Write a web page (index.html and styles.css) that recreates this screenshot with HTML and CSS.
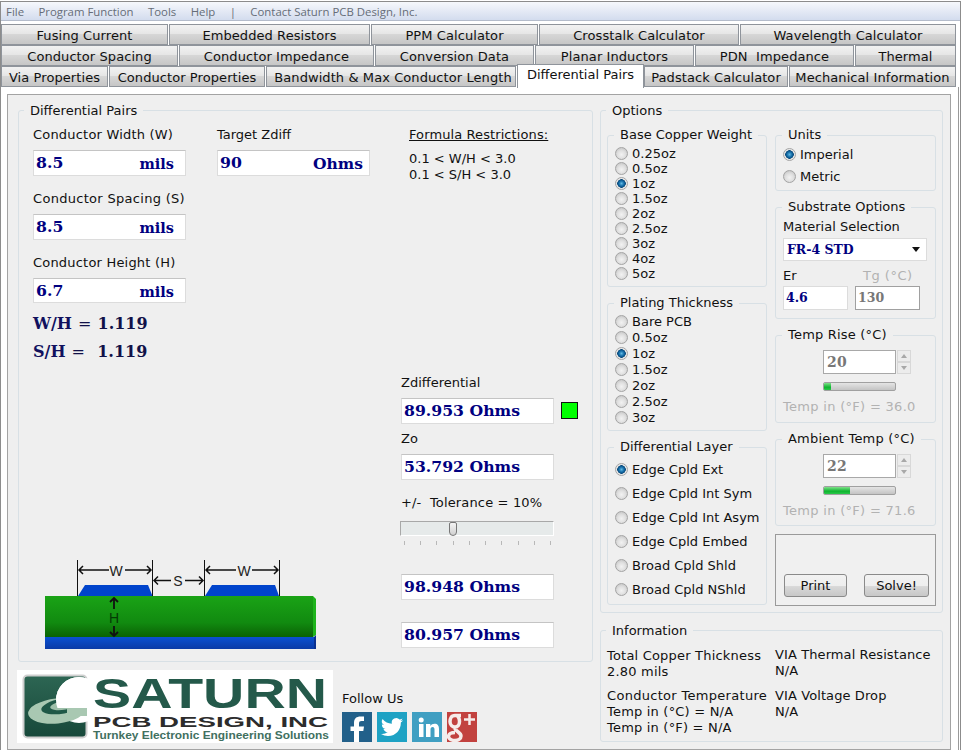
FILE: index.html
```html
<!DOCTYPE html>
<html lang="en">
<head>
<meta charset="utf-8">
<title>Saturn PCB Toolkit</title>
<link rel="stylesheet" href="styles.css">
</head>
<body>
<div class="window">
  <nav class="menubar">
    <span>File</span><span>Program Function</span><span>Tools</span><span>Help</span><span>|</span><span>Contact Saturn PCB Design, Inc.</span>
  </nav>
  <div class="tabs">
    <div class="tabrow row1">
      <div class="tab">Fusing Current</div><div class="tab">Embedded Resistors</div><div class="tab">PPM Calculator</div><div class="tab">Crosstalk Calculator</div><div class="tab">Wavelength Calculator</div>
    </div>
    <div class="tabrow row2">
      <div class="tab">Conductor Spacing</div><div class="tab">Conductor Impedance</div><div class="tab">Conversion Data</div><div class="tab">Planar Inductors</div><div class="tab">PDN&nbsp; Impedance</div><div class="tab">Thermal</div>
    </div>
    <div class="tabrow row3">
      <div class="tab">Via Properties</div><div class="tab">Conductor Properties</div><div class="tab nudge">Bandwidth &amp; Max Conductor Length</div><div class="tab active">Differential Pairs</div><div class="tab">Padstack Calculator</div><div class="tab">Mechanical Information</div>
    </div>
  </div>
  <div class="tabpage">
    <div class="panel">
      <div class="leftside">
        <fieldset class="group dp">
          <legend>Differential Pairs</legend>
          <div class="dpbody">
            <div class="col inputs">
              <div class="lbl">Conductor Width (W)</div>
              <div class="box"><span class="val">8.5</span><span class="unit">mils</span></div>
              <div class="lbl next wide">Conductor Spacing (S)</div>
              <div class="box"><span class="val">8.5</span><span class="unit">mils</span></div>
              <div class="lbl next">Conductor Height (H)</div>
              <div class="box short"><span class="val">6.7</span><span class="unit">mils</span></div>
              <div class="ratio"><b class="rk">W/H</b> = <b>1.119</b></div>
              <div class="ratio"><b class="rk">S/H</b> =&nbsp; <b>1.119</b></div>
            </div>
            <div class="col">
              <div class="lbl">Target Zdiff</div>
              <div class="box"><span class="val">90</span><span class="unit big">Ohms</span></div>
            </div>
            <div class="col results">
              <div class="restrict">
                <div class="lbl under">Formula Restrictions:</div>
                <div class="rline first">0.1 &lt; W/H &lt; 3.0</div>
                <div class="rline">0.1 &lt; S/H &lt; 3.0</div>
              </div>
              <div class="lbl zd">Zdifferential</div>
              <div class="boxrow">
                <div class="box"><span class="val">89.953 Ohms</span></div>
                <div class="swatch"></div>
              </div>
              <div class="lbl zo">Zo</div>
              <div class="box"><span class="val">53.792 Ohms</span></div>
              <div class="lbl tol">+/- &nbsp;Tolerance = 10%</div>
              <div class="slider"><div class="thumb"></div></div>
              <div class="ticks"><i></i><i></i><i></i><i></i><i></i><i></i><i></i><i></i><i></i><i></i></div>
              <div class="box hi"><span class="val">98.948 Ohms</span></div>
              <div class="box lo"><span class="val">80.957 Ohms</span></div>
            </div>
            <svg class="diagram" viewBox="0 0 290 100" width="290" height="100" aria-label="Differential pair cross section">
              <defs>
                <linearGradient id="gr" x1="0" y1="0" x2="0" y2="1"><stop offset="0" stop-color="#1aa316"/><stop offset=".65" stop-color="#118a10"/><stop offset="1" stop-color="#0a6204"/></linearGradient>
                <linearGradient id="bl" x1="0" y1="0" x2="0" y2="1"><stop offset="0" stop-color="#0a50d2"/><stop offset="1" stop-color="#0a3aa6"/></linearGradient>
              </defs>
              <rect x="12" y="40" width="268" height="41" fill="url(#gr)"/>
              <polygon points="280,40 283,43 283,79 280,81" fill="#1eb41c"/>
              <rect x="12" y="81" width="269" height="12" fill="url(#bl)"/>
              <polygon points="281,81 283,79 283,93 281,93" fill="#0a3090"/>
              <polygon points="45,40 52,29 115,29 119.500,40" fill="#0044cc"/>
              <polygon points="172,40 179,29 242,29 246,40" fill="#0044cc"/>
              <g class="dim">
                <path class="hair" d="M44.500 4V40M119.500 4V40M171.500 4V40M246.500 4V40"/>
                <path d="M46 14H76M92 14H118M50 10L46 14L50 18M114 10L118 14L114 18"/>
                <path d="M121 24.500H138M152 24.500H170M125 20.500L121 24.500L125 28.500M166 20.500L170 24.500L166 28.500"/>
                <path d="M173 14H203M219 14H245M177 10L173 14L177 18M241 10L245 14L241 18"/>
                <path class="thick" d="M81 42V53M81 70V80M77 46L81 42L85 46M77 76L81 80L85 76"/>
              </g>
              <text class="dimtext" x="83" y="19.500" text-anchor="middle">W</text>
              <text class="dimtext" x="145" y="30" text-anchor="middle">S</text>
              <text class="dimtext" x="211" y="19.500" text-anchor="middle">W</text>
              <text class="dimtext dark" x="81" y="66.500" text-anchor="middle">H</text>
            </svg>
          </div>
        </fieldset>
        <div class="footer">
          <svg class="logo" viewBox="0 0 316 73" width="316" height="73" aria-label="Saturn PCB Design logo">
            <defs>
              <linearGradient id="em" x1="0" y1="0" x2="0" y2="1"><stop offset="0" stop-color="#2d6653"/><stop offset="1" stop-color="#17483a"/></linearGradient>
              <clipPath id="emclip"><rect x="6" y="5" width="66" height="64" rx="4"/></clipPath>
              <clipPath id="upper"><rect x="36" y="0" width="40" height="38"/></clipPath>
            </defs>
            <rect width="316" height="73" fill="#fff"/>
            <rect x="6.500" y="5.500" width="63" height="62" rx="4" fill="url(#em)" stroke="#cfcfcf" stroke-width="2"/>
            <g clip-path="url(#emclip)">
              <circle cx="62" cy="30" r="23" fill="#fff"/>
              <ellipse cx="40" cy="41" rx="29" ry="12.500" fill="#a9c8b2" transform="rotate(-6 40 41)"/>
              <ellipse cx="46" cy="36" rx="22" ry="7.500" fill="#1f5847" transform="rotate(-10 46 36)"/>
              <ellipse cx="48" cy="35" rx="15" ry="4.500" fill="#9dbfa9" transform="rotate(-10 48 35)"/>
              <ellipse cx="52" cy="34" rx="11" ry="3" fill="#1f5847" transform="rotate(-10 52 34)"/>
              <circle cx="62" cy="30" r="23" fill="#fff" clip-path="url(#upper)"/>
              <rect x="50" y="38" width="20" height="8" fill="#a9c8b2"/>
            </g>
            <text class="l1" x="76" y="37.500" textLength="234" lengthAdjust="spacingAndGlyphs">SATURN</text>
            <text class="l2" x="76" y="57" textLength="235" lengthAdjust="spacingAndGlyphs">PCB DESIGN, INC</text>
            <text class="l3" x="76" y="69" textLength="236" lengthAdjust="spacingAndGlyphs">Turnkey Electronic Engineering Solutions</text>
          </svg>
          <div class="follow">
            <div class="lbl">Follow Us</div>
            <div class="social">
              <svg viewBox="0 0 30 30" width="30" height="30" aria-label="Facebook"><rect width="30" height="30" fill="#22608a"/><path fill="#fff" d="M12 30V19H8.500v-4.500H12V11c0-4.500 2.500-6.500 6.500-6.500H22V9h-2.500c-1.800 0-2.500.8-2.500 2.500v3h5l-.7 4.500H17v11z"/></svg>
              <svg viewBox="0 0 30 30" width="30" height="30" aria-label="Twitter"><rect width="30" height="30" fill="#1ea2c4"/><path fill="#fff" transform="translate(4 4) scale(.92)" d="M23.950 4.570a10 10 0 0 1-2.820.77 4.960 4.960 0 0 0 2.160-2.720 9.900 9.900 0 0 1-3.120 1.190 4.920 4.920 0 0 0-8.380 4.480A13.980 13.980 0 0 1 1.670 3.150a4.920 4.920 0 0 0 1.520 6.570 4.900 4.900 0 0 1-2.230-.62v.06a4.920 4.920 0 0 0 3.950 4.830 5 5 0 0 1-2.210.08 4.940 4.940 0 0 0 4.600 3.420A9.870 9.870 0 0 1 0 19.540a13.940 13.940 0 0 0 7.550 2.210c9.060 0 14-7.500 14-13.980 0-.21 0-.42-.02-.63A9.940 9.940 0 0 0 24 4.590z"/></svg>
              <svg viewBox="0 0 30 30" width="30" height="30" aria-label="LinkedIn"><rect width="30" height="30" fill="#409fc2"/><rect x="7" y="12" width="4.500" height="13" fill="#fff"/><circle cx="9.200" cy="8" r="2.500" fill="#fff"/><path fill="#fff" d="M14 12h4.300v2c1-1.500 2.500-2.300 4.200-2.300 3.200 0 4.500 2 4.500 5.300v8h-4.500v-7.500c0-1.600-.6-2.500-1.900-2.500-1.400 0-2.100 1-2.100 2.600V25H14z"/></svg>
              <svg viewBox="0 0 30 30" width="30" height="30" aria-label="Google Plus"><rect width="30" height="30" fill="#c2423f"/><path fill="none" stroke="#f6ecea" stroke-width="3.500" d="M14 3.500H8C4 3.500 3 7 3 9.500c0 3 2 5.500 5 5.500s4.500-2.500 4.500-5.500-1.500-6-3.500-6M8.500 16c-1 1 0 2 2 3.500s3.500 2.500 3.500 4.500c0 3-3 4.500-6 4.500S1.500 27 1.500 24.500 4.500 20.500 8 20.500"/><path fill="none" stroke="#f6ecea" stroke-width="2.500" d="M22.500 2v11M17 7.500h11"/></svg>
            </div>
          </div>
        </div>
      </div>
      <div class="rightside">
        <fieldset class="group options">
          <legend>Options</legend>
          <div class="optbody">
            <div class="optcol">
              <fieldset class="sub copper">
                <legend>Base Copper Weight</legend>
                <div class="radio-row"><i class="radio"></i>0.25oz</div>
                <div class="radio-row"><i class="radio"></i>0.5oz</div>
                <div class="radio-row"><i class="radio on"></i>1oz</div>
                <div class="radio-row"><i class="radio"></i>1.5oz</div>
                <div class="radio-row"><i class="radio"></i>2oz</div>
                <div class="radio-row"><i class="radio"></i>2.5oz</div>
                <div class="radio-row"><i class="radio"></i>3oz</div>
                <div class="radio-row"><i class="radio"></i>4oz</div>
                <div class="radio-row"><i class="radio"></i>5oz</div>
              </fieldset>
              <fieldset class="sub plating">
                <legend>Plating Thickness</legend>
                <div class="radio-row"><i class="radio"></i>Bare PCB</div>
                <div class="radio-row"><i class="radio"></i>0.5oz</div>
                <div class="radio-row"><i class="radio on"></i>1oz</div>
                <div class="radio-row"><i class="radio"></i>1.5oz</div>
                <div class="radio-row"><i class="radio"></i>2oz</div>
                <div class="radio-row"><i class="radio"></i>2.5oz</div>
                <div class="radio-row"><i class="radio"></i>3oz</div>
              </fieldset>
              <fieldset class="sub layer">
                <legend>Differential Layer</legend>
                <div class="radio-row"><i class="radio on"></i>Edge Cpld Ext</div>
                <div class="radio-row"><i class="radio"></i>Edge Cpld Int Sym</div>
                <div class="radio-row"><i class="radio"></i>Edge Cpld Int Asym</div>
                <div class="radio-row"><i class="radio"></i>Edge Cpld Embed</div>
                <div class="radio-row"><i class="radio"></i>Broad Cpld Shld</div>
                <div class="radio-row"><i class="radio"></i>Broad Cpld NShld</div>
              </fieldset>
            </div>
            <div class="optcol">
              <fieldset class="sub units">
                <legend>Units</legend>
                <div class="radio-row"><i class="radio on"></i>Imperial</div>
                <div class="radio-row"><i class="radio"></i>Metric</div>
              </fieldset>
              <fieldset class="sub substrate">
                <legend>Substrate Options</legend>
                <div class="lbl">Material Selection</div>
                <div class="select"><span class="val small">FR-4 STD</span><i class="caret"></i></div>
                <div class="ertg">
                  <div class="ercol">
                    <div class="lbl">Er</div>
                    <div class="mini"><span class="val small">4.6</span></div>
                  </div>
                  <div class="ercol">
                    <div class="lbl off tg">Tg (°C)</div>
                    <div class="mini dis"><span class="val small">130</span></div>
                  </div>
                </div>
              </fieldset>
              <fieldset class="sub temp">
                <legend>Temp Rise (°C)</legend>
                <div class="spinrow">
                  <div class="spinbox"><span class="val small">20</span></div>
                  <div class="spin"><b class="up"></b><b class="down"></b></div>
                </div>
                <div class="meter"><div class="fill f1"></div></div>
                <div class="lbl off readout">Temp in (°F) = 36.0</div>
              </fieldset>
              <fieldset class="sub temp amb">
                <legend>Ambient Temp (°C)</legend>
                <div class="spinrow">
                  <div class="spinbox"><span class="val small">22</span></div>
                  <div class="spin"><b class="up"></b><b class="down"></b></div>
                </div>
                <div class="meter"><div class="fill f2"></div></div>
                <div class="lbl off readout">Temp in (°F) = 71.6</div>
              </fieldset>
              <div class="actions">
                <button class="btn print" type="button">Print</button>
                <button class="btn solve" type="button">Solve!</button>
              </div>
            </div>
          </div>
        </fieldset>
        <fieldset class="group info">
          <legend>Information</legend>
          <div class="infobody">
            <div class="infocol">
              <div class="lbl">Total Copper Thickness</div>
              <div class="lbl">2.80 mils</div>
              <div class="lbl gapped">Conductor Temperature</div>
              <div class="lbl">Temp in (°C) = N/A</div>
              <div class="lbl">Temp in (°F) = N/A</div>
            </div>
            <div class="infocol second">
              <div class="lbl">VIA Thermal Resistance</div>
              <div class="lbl">N/A</div>
              <div class="lbl gapped">VIA Voltage Drop</div>
              <div class="lbl">N/A</div>
            </div>
          </div>
        </fieldset>
      </div>
    </div>
  </div>
</div>
</body>
</html>
```

FILE: styles.css
```css
* { box-sizing: border-box; }
html, body { margin: 0; padding: 0; background: #fff; }
body {
  width: 963px;
  height: 750px;
  overflow: hidden;
  font: 13px/16px "DejaVu Sans", sans-serif;
  color: #111;
}
.window {
  width: 961px;
  height: 749px;
  margin-top: 1px;
  border: 1px solid #8c8c8c;
  border-bottom: 0;
  display: flex;
  flex-direction: column;
  background: #fff;
}
.menubar {
  height: 19px;
  flex: none;
  display: flex;
  gap: 14.400px;
  align-items: center;
  padding: 2px 0 0 5px;
  background: linear-gradient(#f6f8fc, #d3dcee);
  border-bottom: 1px solid #b4bccb;
  font: 11.400px/16px "Open Sans", sans-serif;
  color: #666d78;
}
.tabs { flex: none; padding-top: 3px; }
.tabrow { display: grid; column-gap: 1px; height: 21px; }
.row1 { grid-template-columns: 167px 201px 167px 200px 216px; }
.row2 { grid-template-columns: 177px 195px 159px 159px 159px 101px; }
.row3 { grid-template-columns: 107px 156px 250px 126px 144px 167px; }
.tab {
  height: 21px;
  border: 1px solid #8f949b;
  background: linear-gradient(#f2f2f2 0, #e6e6e6 45%, #d6d6d6 50%, #c6c6c6 100%);
  text-align: center;
  line-height: 21px;
  letter-spacing: .08px;
  white-space: nowrap;
}
.tab.nudge { padding-left: 4px; }
.tab.active {
  position: relative;
  z-index: 2;
  height: 24px;
  margin-top: -2px;
  margin-right: -1px;
  border-bottom: 0;
  background: #fff;
  line-height: 20px;
  letter-spacing: 0;
}
.tabpage {
  flex: 1;
  min-height: 0;
  margin-right: 1px;
  padding: 7px 6px 0;
  border-right: 1px solid #9a9a9a;
  background: #fff;
}
.panel {
  height: 100%;
  width: 944px;
  display: flex;
  gap: 7px;
  padding: 8px 7px 0 10px;
  background: #efefef;
  border: 1px solid #a3a3a3;
}
.leftside { width: 575px; flex: none; }
.rightside { width: 343px; flex: none; }

fieldset { margin: 0; padding: 0; min-width: 0; }
.group, .sub { border: 1px solid #d8e0e5; border-radius: 3px; }
legend { margin-left: 5px; padding: 0 6px; line-height: 15px; }
.sub > legend { margin-left: 6px; line-height: 16px; }

.dp { height: 559px; }
.dpbody {
  display: grid;
  height: 543px;
  padding: 8px 0 5px 14px;
  grid-template-columns: 153px 153px 1fr;
  grid-template-rows: auto 1fr;
  column-gap: 31px;
}
.col { min-width: 0; }
.results { grid-column: 3; grid-row: 1 / 3; }
.diagram { grid-column: 1 / 3; grid-row: 2; align-self: end; display: block; }
.lbl { padding-top: 1px; margin-bottom: -1px; line-height: 16px; white-space: nowrap; }
.lbl.next { margin-top: 14px; }
.inputs .lbl { letter-spacing: .2px; }
.inputs .lbl.wide { letter-spacing: .3px; }
.box {
  display: flex;
  justify-content: space-between;
  width: 153px;
  height: 26px;
  margin-top: 8px;
  padding: 0 11px 0 2px;
  background: #fff;
  border: 1px solid #dcdcdc;
  border-top-color: #c4c4c4;
}
.box.short { height: 25px; }
.val {
  font: bold 15.700px/24px "DejaVu Serif", serif;
  color: #000080;
  white-space: nowrap;
}
.val.small { font-size: 12.500px; line-height: 22px; }
.unit {
  font: bold 14.500px/25px "DejaVu Serif", serif;
  color: #000080;
}
.unit.big { font-size: 15.500px; margin-right: -5px; }
.ratio {
  margin-top: 12px;
  font: 16px/16px "DejaVu Serif", serif;
  word-spacing: 1px;
  color: #111148;
  white-space: nowrap;
}
.box.short + .ratio { margin-top: 13px; }
.ratio b { font-weight: bold; }
.ratio .rk { color: #11115e; }
.under { text-decoration: underline; letter-spacing: .1px; }
.restrict { padding-left: 8px; }
.rline { padding-top: 1px; margin-bottom: -1px; line-height: 16px; }
.rline.first { margin-top: 8px; }
.zd { margin-top: 192px; }
.boxrow { display: flex; align-items: flex-start; gap: 7px; }
.swatch {
  width: 17px;
  height: 17px;
  margin-top: 12px;
  background: #00ff00;
  border: 1px solid #111;
}
.zo { margin-top: 6px; }
.tol { margin-top: 14px; letter-spacing: .15px; }
.slider {
  position: relative;
  width: 154px;
  height: 15px;
  margin: 11px 0 0 -1px;
  background: #e6eaea;
  border: 1px solid #fff;
  border-top-color: #a8a8a8;
  border-left-color: #a8a8a8;
}
.thumb {
  position: absolute;
  left: 48px;
  top: 0;
  width: 8px;
  height: 14px;
  border: 1px solid #777;
  border-radius: 2px 2px 4px 4px;
  background: linear-gradient(#f4f4f4, #d0d0d0);
}
.ticks {
  display: flex;
  justify-content: space-between;
  width: 147px;
  margin: 5px 0 0 3px;
}
.ticks i { width: 1px; height: 4px; background: #b8b8b8; }
.box.hi { margin-top: 29px; }
.box.lo { margin-top: 22px; }

.footer { display: flex; align-items: flex-end; gap: 9px; margin: 8px 0 0 -1px; }
.logo { display: block; flex: none; }
.follow { margin-bottom: 1px; }
.social { display: flex; gap: 5px; margin-top: 6px; }
.social svg { display: block; }
.l1 { font: bold 42px "Liberation Sans", sans-serif; fill: #24594a; }
.l2 { font: bold 15px "Liberation Sans", sans-serif; fill: #2c2c2c; }
.l3 { font: bold 10px "Liberation Sans", sans-serif; fill: #41705f; }
.dim { fill: none; stroke: #111; stroke-width: 1.500px; }
.dim .hair { stroke-width: 1px; }
.dim .thick { stroke-width: 1.800px; }
.dimtext { font: 14px "Liberation Sans", sans-serif; fill: #222; }
.dimtext.dark { fill: #053a05; }

.options { height: 510px; }
.optbody {
  display: grid;
  grid-template-columns: 160px 161px;
  column-gap: 8px;
  padding: 9px 0 0 6px;
}
.optcol { display: flex; flex-direction: column; gap: 8px; min-width: 0; }
.radio-row {
  display: flex;
  align-items: center;
  gap: 4px;
  padding: 2px 0 0 7px;
  white-space: nowrap;
}
.radio {
  width: 13px;
  height: 13px;
  margin-top: -2px;
  flex: none;
  border-radius: 50%;
  border: 1px solid #a4a4a4;
  background: radial-gradient(circle at 50% 60%, #f2f2f2 0, #e0e0e0 45%, #cccccc 75%, #ececec 100%);
}
.radio.on {
  background: radial-gradient(circle at 50% 50%, #62b9e4 0, #146da8 2.500px, #0b4b7c 4px, #e2e2e2 4.500px, #f2f2f2 6px);
}
.copper { height: 160px; }
.copper .radio-row { height: 15px; }
.copper legend { margin-bottom: 2.500px; }
.plating { height: 136px; }
.plating .radio-row { height: 16px; }
.plating legend { margin-bottom: 2px; }
.layer { height: 166px; }
.layer .radio-row { height: 24px; }
.layer legend { margin-bottom: 2px; }
.units { height: 64px; }
.units .radio-row { height: 22px; }
.substrate { height: 120px; padding: 0 7px; }
.substrate legend { margin-left: -1px; }
.substrate > .lbl { margin-top: 3px; }
.select {
  display: flex;
  justify-content: space-between;
  align-items: center;
  width: 144px;
  height: 23px;
  margin-top: 4px;
  padding: 0 6px 0 3px;
  background: #fff;
  border: 1px solid #dcdcdc;
}
.caret {
  width: 0;
  height: 0;
  border: 4px solid transparent;
  border-top: 5px solid #111;
  border-bottom: 0;
}
.ertg { display: flex; gap: 7px; margin-top: 6px; }
.ercol { width: 65px; }
.ercol .tg { padding-left: 8px; letter-spacing: .5px; }
.off { color: #b2b2b2; }
.mini {
  width: 65px;
  height: 24px;
  margin-top: 3px;
  padding: 0 2px;
  background: #fff;
  border: 1px solid #dcdcdc;
}
.mini.dis { border-color: #a0a0a0; }
.mini.dis .val, .spinbox .val { color: #777; }
.temp { height: 96px; padding: 0 7px; letter-spacing: .2px; }
.temp.amb { height: 95px; }
.temp legend { margin-left: -1px; }
.spinrow { display: flex; gap: 1px; margin: 7px 0 0 40px; }
.spinbox {
  width: 73px;
  height: 24px;
  padding: 0 3px;
  background: #fff;
  border: 1px solid #a8a8a8;
}
.spinbox .val { font-size: 14px; }
.spin { display: flex; flex-direction: column; width: 14px; }
.spin b {
  flex: 1;
  display: flex;
  align-items: center;
  justify-content: center;
  border: 1px solid #d8d8d8;
  background: #ececec;
}
.spin b::before {
  content: "";
  border: 3px solid transparent;
  border-bottom: 0;
  border-top: 4px solid #a8a8a8;
}
.spin .up::before { border-top: 0; border-bottom: 4px solid #a8a8a8; }
.meter {
  width: 73px;
  height: 9px;
  margin: 8px 0 0 40px;
  border: 1px solid #a0a0a0;
  border-radius: 2px;
  background: linear-gradient(#e4e4e4, #c4c4c4);
  overflow: hidden;
}
.fill { height: 100%; background: linear-gradient(#7fe08a, #0fb52f 60%, #2ac84a); }
.f1 { width: 7px; }
.f2 { width: 26px; }
.readout { margin-top: 7px; letter-spacing: .3px; }
.actions {
  height: 72px;
  display: flex;
  align-items: flex-end;
  justify-content: space-between;
  padding: 0 6px 8px 8px;
  border: 1px solid #9a9a9a;
  background: #f0f0f0;
}
.btn {
  height: 23px;
  padding: 0;
  font: 13px/16px "DejaVu Sans", sans-serif;
  color: #111;
  border: 1px solid #8a8a8a;
  border-radius: 3px;
  background: linear-gradient(#f2f2f2 0, #eeeeee 50%, #d8d8d8 55%, #c8c8c8 100%);
}
.print { width: 63px; }
.solve { width: 65px; }
.info { height: 119px; margin-top: 10px; }
.infobody {
  display: grid;
  grid-template-columns: 168px 1fr;
  padding: 9px 0 0 6px;
  letter-spacing: .2px;
}
.second { margin-top: -1px; letter-spacing: .1px; }
.gapped { margin-top: 8px; }
.second .gapped { margin-top: 9px; }
.infocol:first-child .gapped { letter-spacing: .3px; }
```
